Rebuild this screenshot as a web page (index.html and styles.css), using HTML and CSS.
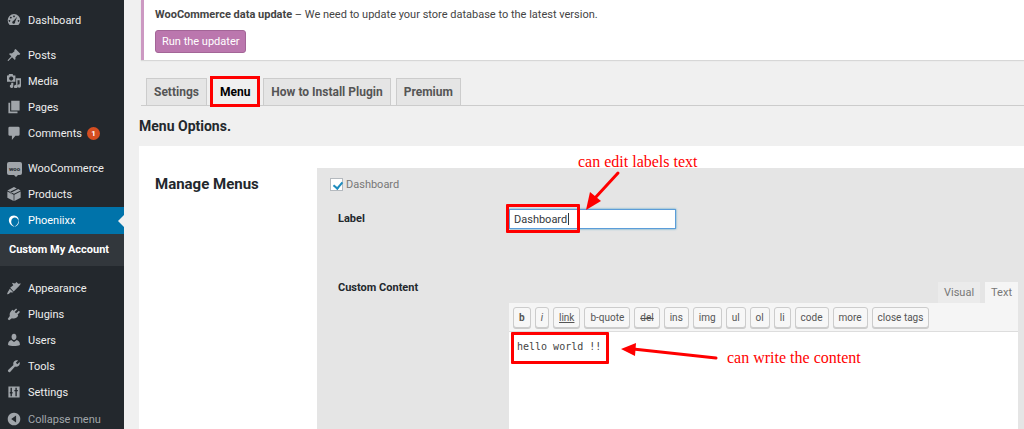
FILE: index.html
```html
<!DOCTYPE html>
<html lang="en">
<head>
    <meta charset="UTF-8">
    <meta name="viewport" content="width=device-width, initial-scale=1.0">
    <title>Custom My Account</title>
    <link rel="stylesheet" href="styles.css">
</head>
<body>

<nav class="sidebar">
    <ul class="menu">
        <li><a href="#"><svg viewBox="0 0 20 20"><path fill-rule="evenodd" d="M3.8 17A9 9 0 1 1 16.200 17zM10 3.500a1.200 1.200 0 1 0 .01 0zM5.500 5.500a1.200 1.200 0 1 0 .01 0zM3.500 10a1.200 1.200 0 1 0 .01 0zM16.500 10a1.200 1.200 0 1 0 .01 0zM14.500 5.500L9 11.500a2 2 0 1 0 2.500 1.500z"/></svg>Dashboard</a></li>
    </ul>
    <ul class="menu">
        <li><a href="#"><svg viewBox="0 0 20 20"><path d="M10.400 3l2-1.500 6.600 6.600-1.500 1.900-2.200-.3-3.300 3.600c.4 1.600.2 3-.7 3.900L7.200 13.200 2 18.500l-1-.1L1.200 17l5-5.200L2.800 8.400c.9-.8 2.500-1 4-.6l3.900-3.100z"/></svg>Posts</a></li>
        <li><a href="#"><svg viewBox="0 0 20 20"><path fill-rule="evenodd" d="M0 2h2l1-2h5l1 2h3v9H0zM6 3.500a3 3 0 1 0 .01 0z"/><path d="M13 6h7v11a2.500 2.500 0 1 1-2-2.400V9h-3v9a2.500 2.500 0 1 1-2-2.400zM6 12.500h3V17a2.500 2.500 0 1 1-3-2z"/></svg>Media</a></li>
        <li><a href="#"><svg viewBox="0 0 20 20"><path d="M6 1h12v14H6zM2 4h2.500v12.500H15V19H2z"/></svg>Pages</a></li>
        <li><a href="#"><svg viewBox="0 0 20 20"><path d="M4 1h12q2 0 2 2v9q0 2-2 2h-4l-5 6v-6H4q-2 0-2-2V3q0-2 2-2z"/></svg>Comments <span class="count">1</span></a></li>
    </ul>
    <ul class="menu">
        <li><a href="#"><span class="woo">woo</span>WooCommerce</a></li>
        <li><a href="#"><svg viewBox="0 0 20 20"><path d="M10 0l4 2-9 4.500v3l2 1v-3l9-4.500 3.500 2L10 9.500.500 5zM.5 6.500l9 4.500v9l-9-4.500zM10.500 11l9-4.500v9l-9 4.500z"/></svg>Products</a></li>
        <li class="current">
            <a href="#"><svg viewBox="0 0 20 20"><path d="M10 2C4 2 2 7 3 11s5 7 8 7c-4-2-5-5-5-7 0-4 3-6 5-6 3 0 5 2 5 5 2-4-2-8-6-8z"/><path d="M17 9c1 5-3 9-6 9 3-2 5-4 6-9z"/></svg>Phoeniixx</a>
        </li>
    </ul>
    <div class="submenu"><a href="#">Custom My Account</a></div>
    <ul class="menu">
        <li><a href="#"><svg viewBox="0 0 20 20"><path d="M7 2.500l4.500 1 2-2 2.500 2.500 4-.5-3 4L9.500 15 4.500 9.500 9 6zM4 11l5 5-2 .5-2-.5-2.500 2.500-2.500.5 1-3z"/></svg>Appearance</a></li>
        <li><a href="#"><svg viewBox="0 0 20 20"><path d="M13 2l1.500 1.500L11 7l2 2 4-3.500L18.500 7 15 11l1 1c-2 4-5 5-9 4l-4 3-2-2 3-4C3 9 5 6 8 4l1.500 1.500z"/></svg>Plugins</a></li>
        <li><a href="#"><svg viewBox="0 0 20 20"><path d="M10 1c2.500 0 3.500 2 3.500 4.500S12 10 10 10 6.500 8 6.500 5.500 7.500 1 10 1zM6 10l4 3 4-3c3 1 4.500 3 4.500 7-4 2-13 2-17 0 0-4 1.500-6 4.500-7z"/></svg>Users</a></li>
        <li><a href="#"><svg viewBox="0 0 20 20"><path d="M16.700 9.700c-1.500 1.500-3.500 1.700-5.200 1l-6.700 7.400c-1 1.100-2.300.9-3-.1-.8-.8-.7-2 .2-2.800l7.200-6.700c-.7-1.700-.2-3.700 1.200-5.200 1.500-1.500 3.600-1.900 5.400-1.200L12.600 5.300l2.200 2.200L18 4.300c.7 1.900.2 3.900-1.300 5.400z"/></svg>Tools</a></li>
        <li><a href="#"><svg viewBox="0 0 20 20"><path fill-rule="evenodd" d="M2 2h16v16H2zM5 4v6H4v2h1v4h2v-4h1v-2H7V4zM12 4v3h-1.500v2H12v7h2V9h1.500V7H14V4z"/></svg>Settings</a></li>
    </ul>
    <button type="button" class="collapse"><svg viewBox="0 0 20 20"><path fill-rule="evenodd" d="M10 1a9 9 0 1 0 .01 0zM13 5v10l-7-5z"/></svg>Collapse menu</button>
</nav>

<main class="content">
    <section class="notice">
        <p><strong>WooCommerce data update</strong> – We need to update your store database to the latest version.</p>
        <button type="button" class="updater">Run the updater</button>
    </section>

    <div class="tabs">
        <a href="#">Settings</a>
        <a href="#" class="active">Menu</a>
        <a href="#">How to Install Plugin</a>
        <a href="#">Premium</a>
    </div>

    <h1>Menu Options.</h1>

    <form class="panel">
        <h2>Manage Menus</h2>
        <div class="fields">
            <label class="check"><input type="checkbox" checked> Dashboard</label>
            <div class="row label-row">
                <label for="menuLabel">Label</label>
                <div class="edit">
                    <input type="text" id="menuLabel" value="Dashboard">
                    <span class="caret"></span>
                    <span class="mark label-mark"></span>
                    <div class="note label-note">can edit labels text</div>
                    <svg class="arrow label-arrow" viewBox="0 0 40 42"><path d="M35 3L12 28" stroke="#f00" stroke-width="3" stroke-linecap="round"/><path d="M3 40l4-18 11 9z" fill="#f00"/></svg>
                </div>
            </div>
            <div class="row">
                <label for="customContent">Custom Content</label>
                <div class="editor">
                    <div class="editor-tabs">
                        <button type="button">Visual</button>
                        <button type="button" class="active">Text</button>
                    </div>
                    <div class="toolbar">
                        <button type="button"><b>b</b></button>
                        <button type="button"><i>i</i></button>
                        <button type="button"><u>link</u></button>
                        <button type="button">b-quote</button>
                        <button type="button"><del>del</del></button>
                        <button type="button">ins</button>
                        <button type="button">img</button>
                        <button type="button">ul</button>
                        <button type="button">ol</button>
                        <button type="button">li</button>
                        <button type="button">code</button>
                        <button type="button">more</button>
                        <button type="button">close tags</button>
                    </div>
                    <div class="edit">
                        <textarea id="customContent" spellcheck="false">hello world !!</textarea>
                        <span class="mark content-mark"></span>
                        <svg class="arrow content-arrow" viewBox="0 0 100 20"><path d="M13 8l83 9" stroke="#f00" stroke-width="3" stroke-linecap="round"/><path d="M1 8l15-6-1 13z" fill="#f00"/></svg>
                        <div class="note content-note">can write the content</div>
                    </div>
                </div>
            </div>
        </div>
    </form>
</main>

</body>
</html>
```
FILE: styles.css
```css
* {
    box-sizing: border-box;
}

body {
    margin: 0;
    height: 100vh;
    overflow: hidden;
    display: flex;
    background: #f0f0f0;
    color: #444;
    font-family: Roboto, "Open Sans", sans-serif;
    font-size: 11px;
}

button, input {
    font-family: inherit;
    font-size: inherit;
}

a {
    color: inherit;
    text-decoration: none;
}

h1, h2, p {
    margin: 0;
}

/* Sidebar */
.sidebar {
    flex: 0 0 124px;
    padding-top: 7px;
    background: #23282d;
    color: #eee;
}

.menu {
    margin: 0 0 9px;
    padding: 0;
    list-style: none;
}

.menu a, .collapse {
    display: flex;
    align-items: center;
    height: 26px;
    padding: 0 0 0 7px;
    white-space: nowrap;
}

.sidebar svg {
    width: 14px;
    height: 14px;
    margin-right: 7px;
    fill: #a0a5aa;
}

.count {
    width: 13px;
    margin-left: 5px;
    border-radius: 7px;
    background: #d54e21;
    color: #fff;
    font-size: 8px;
    font-weight: bold;
    line-height: 13px;
    text-align: center;
}

.woo {
    position: relative;
    width: 15px;
    margin-right: 6px;
    border-radius: 2px;
    background: #a0a5aa;
    color: #23282d;
    font-size: 6px;
    font-weight: bold;
    line-height: 13px;
    text-align: center;
}

.woo::after {
    content: "";
    position: absolute;
    left: 7px;
    top: 13px;
    border: 2px solid transparent;
    border-top-color: #a0a5aa;
}

.current {
    position: relative;
    background: #0073aa;
    color: #fff;
}

.menu .current a {
    height: 27px;
}

.sidebar .current svg {
    fill: #fff;
}

.current::after {
    content: "";
    position: absolute;
    right: 0;
    top: 8px;
    border: 6px solid transparent;
    border-left-width: 0;
    border-right-color: #f0f0f0;
}

.menu:has(.current) {
    margin-bottom: 0;
}

.submenu {
    margin-bottom: 9px;
    padding-left: 9px;
    background: #32373c;
    color: #fff;
    font-weight: bold;
    line-height: 32px;
}

.menu:last-of-type {
    margin-bottom: 5px;
}

.collapse {
    height: 18px;
    border: 0;
    background: none;
    color: #a0a5aa;
}

/* Content */
.content {
    display: flex;
    flex: 1;
    flex-direction: column;
    min-width: 0;
    padding-left: 15px;
}

.notice {
    margin-left: 2px;
    padding: 7px 11px;
    border-left: 3px solid #cc99c2;
    background: #fff;
    box-shadow: 0 1px 1px #0000001a;
}

.notice p {
    line-height: 16px;
}

.updater {
    height: 23px;
    margin-top: 7px;
    padding: 0 6px;
    border: 1px solid #a36597;
    border-radius: 3px;
    background: #bb77ae;
    color: #fff;
}

.tabs {
    display: flex;
    gap: 5px;
    margin: 18px 0 0 2px;
    padding-left: 5px;
    border-bottom: 1px solid #ccc;
    font-size: 12px;
    font-weight: bold;
}

.tabs a {
    padding: 0 7px;
    border: 1px solid #ccc;
    border-bottom: 0;
    background: #e5e5e5;
    color: #555;
    line-height: 26px;
}

.tabs .active {
    outline: 3px solid #f00;
    outline-offset: -1px;
    background: #f0f0f0;
    color: #000;
}

h1 {
    margin: 10px 0;
    color: #23282d;
    font-size: 14px;
    line-height: 20px;
}

.panel {
    display: flex;
    flex: 1;
    padding: 22px 0 0 16px;
    background: #fff;
}

h2 {
    flex: 0 0 162px;
    padding-top: 6px;
    color: #23282d;
    font-size: 15px;
    line-height: 20px;
}

.fields {
    flex: 1;
    min-width: 0;
    padding: 8px 0 0 13px;
    background: #e5e5e5;
}

.check {
    display: flex;
    align-items: center;
    gap: 3px;
    height: 16px;
    color: #777;
}

.check input {
    appearance: none;
    width: 13px;
    height: 13px;
    margin: 0;
    border: 1px solid #b4b9be;
    background: #fff;
}

.check input:checked::before {
    content: "";
    display: block;
    width: 4px;
    height: 7px;
    margin: 1px 0 0 4px;
    border: solid #1e8cbe;
    border-width: 0 2px 2px 0;
    transform: rotate(40deg);
}

.row {
    display: flex;
    padding-left: 8px;
}

.row > label {
    flex: 0 0 171px;
    color: #23282d;
    font-weight: bold;
    line-height: 12px;
}

.label-row {
    height: 73px;
    margin-top: 17px;
}

.label-row > label {
    padding-top: 4px;
}

.edit {
    position: relative;
}

.edit input {
    width: 167px;
    height: 20px;
    padding: 0 4px;
    border: 1px solid #5b9dd9;
    outline: none;
    box-shadow: 0 0 2px #1e8cbecc;
    color: #32373c;
}

.caret {
    position: absolute;
    left: 59px;
    top: 4px;
    width: 1px;
    height: 12px;
    background: #32373c;
}

.editor {
    flex: 1;
    min-width: 0;
    padding-right: 6px;
}

.editor-tabs {
    display: flex;
    justify-content: flex-end;
    gap: 5px;
}

.editor-tabs button {
    height: 21px;
    padding: 0 6px;
    border: 0;
    background: #ebebeb;
    color: #777;
}

.editor-tabs .active {
    background: #f5f5f5;
}

.toolbar {
    display: flex;
    gap: 4px;
    padding: 4px 4px 3px;
    border-bottom: 1px solid #ddd;
    background: #f5f5f5;
}

.toolbar button {
    height: 21px;
    padding: 0 5px;
    border: 1px solid #ccc;
    border-radius: 3px;
    background: #f7f7f7;
    box-shadow: 0 1px 0 #ccc;
    color: #555;
    font-size: 10px;
}

textarea {
    display: block;
    width: 100%;
    height: 97px;
    padding: 7px 8px;
    border: 0;
    background: #fff;
    color: #444;
    font-family: "DejaVu Sans Mono", monospace;
    font-size: 10px;
    line-height: 16px;
    resize: none;
}

/* Annotations */
.mark {
    position: absolute;
    border: 3px solid #f00;
    border-radius: 1px;
}

.label-mark {
    left: -3px;
    top: -5px;
    width: 74px;
    height: 29px;
}

.content-mark {
    left: 2px;
    top: 0;
    width: 98px;
    height: 32px;
}

.note {
    position: absolute;
    color: #f00;
    font-family: "Liberation Serif", serif;
    font-size: 16px;
    line-height: 20px;
    white-space: nowrap;
}

.arrow {
    position: absolute;
    fill: none;
}

.label-note {
    left: 69px;
    top: -57px;
}

.label-arrow {
    left: 74px;
    top: -39px;
    width: 40px;
}

.content-arrow {
    left: 111px;
    top: 9px;
    width: 100px;
}

.content-note {
    left: 218px;
    top: 16px;
}
```
